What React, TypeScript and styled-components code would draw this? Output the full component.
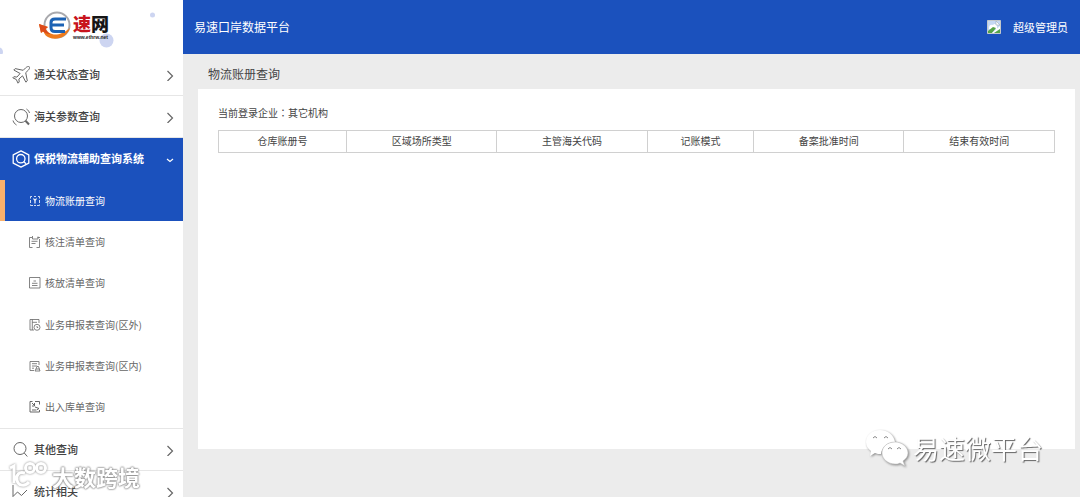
import React from 'react';
import styled, { createGlobalStyle, css } from 'styled-components';

const BLUE = '#1b51bd';

const GlobalStyle = createGlobalStyle`
  * { box-sizing: border-box; }
  body {
    margin: 0;
    background: #ececec;
    font-family: "Noto Sans CJK SC", "Liberation Sans", sans-serif;
    color: #444;
  }
`;

const Page = styled.div`
  display: flex;
  height: 100vh;
  overflow: hidden;
`;

const Sidebar = styled.aside`
  flex: 0 0 183px;
  background: #fff;
  overflow: hidden;
`;

const LogoBox = styled.div`
  position: relative;
  display: flex;
  height: 54px;
  padding: 10px 0 0 38px;
`;

const Bubbles = styled.svg`
  position: absolute;
  left: 0;
  top: 0;
`;

const LogoMark = styled.svg`
  position: relative;
  flex: none;
`;

const LogoWords = styled.div`
  position: relative;
  padding-top: 3px;
`;

const LogoName = styled.div`
  font-size: 18px;
  font-weight: 900;
  line-height: 21px;
  color: #151515;
`;

const LogoRed = styled.span`
  color: #c8141d;
`;

const LogoUrl = styled.div`
  font: bold 5px/6px "Liberation Sans", sans-serif;
  color: #222;
`;

const MenuButton = styled.button<{ $active?: boolean }>`
  display: flex;
  align-items: center;
  gap: 4px;
  width: 100%;
  height: 42px;
  padding: 0 8px 0 12px;
  border: 0;
  border-bottom: 1px solid #e6e6e6;
  background: #fff;
  color: #666;
  font: 500 11px/16px "Noto Sans CJK SC", sans-serif;
  text-align: left;
  ${p => p.$active && css`
    border-bottom-color: ${BLUE};
    background: ${BLUE};
    color: #fff;
    font-weight: 700;
  `}
`;

const MenuLabel = styled.span<{ $active?: boolean }>`
  flex: 1;
  padding-bottom: 2px;
  color: ${p => (p.$active ? '#fff' : '#444')};
  white-space: nowrap;
`;

const SubMenu = styled.nav`
  display: grid;
  grid-template-rows: repeat(6, 1fr);
  height: 249px;
  border-bottom: 1px solid #e6e6e6;
`;

const SubLink = styled.a<{ $active?: boolean }>`
  display: flex;
  align-items: center;
  gap: 4px;
  padding-left: 24px;
  border-left: 5px solid ${p => (p.$active ? '#f9b06c' : 'transparent')};
  background: ${p => (p.$active ? BLUE : '#fff')};
  color: ${p => (p.$active ? '#fff' : '#666')};
  font-size: 10px;
  line-height: 16px;
  text-decoration: none;
  white-space: nowrap;
`;

const Main = styled.div`
  display: flex;
  flex: 1;
  flex-direction: column;
  min-width: 0;
`;

const TopBar = styled.header`
  display: flex;
  flex: none;
  align-items: center;
  justify-content: space-between;
  height: 54px;
  padding: 0 12px 0 11px;
  background: ${BLUE};
  color: #fff;
`;

const SiteTitle = styled.span`
  font-size: 12px;
  line-height: 18px;
`;

const User = styled.div`
  display: flex;
  align-items: center;
  gap: 12px;
  font-size: 11px;
  line-height: 16px;
`;

const PageTitle = styled.h1`
  margin: 0;
  padding: 11px 0 6px 25px;
  font-size: 12px;
  font-weight: 400;
  line-height: 18px;
`;

const Panel = styled.section`
  flex: 1;
  margin: 0 5px 48px 15px;
  padding: 16px 20px;
  background: #fff;
`;

const Company = styled.p`
  margin: 0 0 9px;
  font-size: 10px;
  line-height: 16px;
`;

const Colon = styled.span`
  font-family: "Noto Sans CJK TC", sans-serif;
`;

const Table = styled.table`
  width: 100%;
  border-collapse: collapse;
  table-layout: fixed;
`;

const Th = styled.th<{ $width: number }>`
  width: ${p => p.$width}%;
  height: 22px;
  padding: 0 0 2px;
  border: 1px solid #d0d0d0;
  font-size: 10px;
  font-weight: 400;
  line-height: 16px;
`;

const Watermark = styled.div<{ $side: 'left' | 'right' }>`
  position: fixed;
  display: flex;
  align-items: center;
  color: #fff;
  white-space: nowrap;
  pointer-events: none;
  ${p => p.$side === 'left' ? css`
    left: 8px;
    bottom: 5px;
    gap: 4px;
    font-size: 22px;
    font-weight: 700;
    line-height: 32px;
    text-shadow: 0 0 2px #888, 0 0 2px #888, 0 0 2px #aaa;
  ` : css`
    right: 37px;
    bottom: 30px;
    gap: 4px;
    font-size: 26px;
    line-height: 38px;
    text-shadow: 1px 1px 1px #666;
  `}
`;

const WatermarkArt = styled.svg<{ $glow?: boolean }>`
  filter: ${p => (p.$glow ? 'drop-shadow(0 0 1px #888)' : 'drop-shadow(1px 1px 1px #888)')};
`;

const menuIcons: Record<string, React.ReactNode> = {
  plane: <path d="M17.3.8c-1-.7-2.500 0-3.600 1L11.200 4.300 3.200 2.600 1.800 4l6.300 3.500-3.200 3.600-3-.4L.8 11.800l3.500 1.700 1.700 3.700 1.200-1.200-.3-3 3.600-3.200 3.400 6.400 1.400-1.400-1.600-8.100 2.600-2.500c1-1.100 1.700-2.700 1-3.400z" />,
  scan: <><circle cx="9" cy="8" r="6.500" /><path d="M13.500 12.700l3.500 3.800" strokeWidth="2" /><path d="M1 12.500c.6 2 1.800 3.500 3.500 4.500M14.500 1c1.600 1 2.500 2.400 3 4" /></>,
  hex: <><path d="M9 .8l7.800 4v8.400L9 17.200l-7.800-4V4.800z" strokeWidth="1.300" /><circle cx="8.800" cy="8.700" r="4.200" strokeWidth="1.300" /><path d="M11.600 11.500l2.400 2.200" strokeWidth="1.300" /></>,
  search: <><circle cx="8" cy="7.500" r="6" /><path d="M12.300 12l3 3.500" /></>,
  chart: <path d="M1 2v14.500M1.500 13l4-4 4 3.500L15 7" />,
};

const subIcons: Record<string, React.ReactNode> = {
  ledger: <><path d="M3 1.500H1.500v2M1.500 5v3M1.500 9.500v1H4M9 1.500h1.500v2M10.500 5v3M10.500 9.500v1H8M5 1.500h2M5 10.500h2" /><path d="M4.500 3.500L6 5.500l1.500-2M6 5.500v3" strokeWidth="1.200" /></>,
  notes: <><path d="M3 1.500H.5v10h3M8.500 1.500H11M10.500 3v8.500H7.500" /><path d="M3.500 0v3H9V.5M2.500 5.300h6M2.500 7.500h4" /></>,
  release: <path d="M.5.500h10.500v10.500H.5zM3 8.500h5.500M3 6.300h5.500M4.500 4h2.500" />,
  outside: <><path d="M5 11H1V.5h9V4M3.300 3.300H8M3.300.500V11" /><circle cx="8" cy="8.300" r="3" /><path d="M8 7v1.500h1.200" /></>,
  inside: <path d="M5 10.500H1v-9h9V5M3 3.700h5M3 6h5M3 8.200h2M6 11l2-4.500h1.500L11 11zM7 9h3.500" />,
  stock: <path d="M3.500.500H1v10.500h9.500V9M6 .5h4.500v3M3 2l2.500 2.500M5.500 2v3H3M3 9h4M6 6l4 1.500L7.500 9" strokeWidth="1" />,
};

function MenuIcon({ name }: { name: string }) {
  return <svg width="18" height="18" viewBox="0 0 18 18" fill="none" stroke="currentColor" strokeLinejoin="round" aria-hidden="true">{menuIcons[name]}</svg>;
}

function SubIcon({ name }: { name: string }) {
  return <svg width="12" height="12" viewBox="0 0 12 12" fill="none" stroke="currentColor" strokeWidth="0.8" aria-hidden="true">{subIcons[name]}</svg>;
}

function Chevron({ open }: { open?: boolean }) {
  return (
    <svg width="10" height="12" viewBox="0 0 10 12" fill="none" stroke="currentColor" strokeWidth="1.2" aria-hidden="true">
      <path d={open ? 'M2 6l3 2.500L8 6' : 'M2.500 2l5 5-5 5'} />
    </svg>
  );
}

function MenuItem({ icon, label, active }: { icon: string; label: string; active?: boolean }) {
  return (
    <MenuButton type="button" $active={active} aria-expanded={!!active}>
      <MenuIcon name={icon} />
      <MenuLabel $active={active}>{label}</MenuLabel>
      <Chevron open={active} />
    </MenuButton>
  );
}

const subItems = [
  { icon: 'ledger', label: '物流账册查询' },
  { icon: 'notes', label: '核注清单查询' },
  { icon: 'release', label: '核放清单查询' },
  { icon: 'outside', label: '业务申报表查询(区外)' },
  { icon: 'inside', label: '业务申报表查询(区内)' },
  { icon: 'stock', label: '出入库单查询' },
];

const columns = [
  { label: '仓库账册号', width: 15.3 },
  { label: '区域场所类型', width: 18 },
  { label: '主管海关代码', width: 18 },
  { label: '记账模式', width: 12.7 },
  { label: '备案批准时间', width: 18 },
  { label: '结束有效时间', width: 18 },
];

function Logo() {
  return (
    <LogoBox>
      <Bubbles width="183" height="54" aria-hidden="true">
        <circle cx="152.500" cy="15" r="2.500" fill="#cdd5f1" />
        <circle cx="106.500" cy="40.500" r="7" fill="#cdd5f1" />
        <circle cx="-2" cy="52" r="5" fill="#cdd5f1" />
      </Bubbles>
      <LogoMark width="35" height="30" viewBox="0 0 35 30" aria-hidden="true">
        <circle cx="19" cy="15" r="12.500" fill="#fff" stroke="#a9a9ad" strokeWidth="2" />
        <path d="M1 14l9 3-2.500 2C11 25 20 28 32 18c-3 9-13 13-21 9.500-3-1.300-4.500-3-5.500-6L3 23z" fill="#ee7b1c" />
        <path d="M1 14l9 3-2.500 2c1 2 3 4 5 5-4 0-7-2-8-3L3 23z" fill="#dc4a1b" />
        <path d="M28 9H17q-4 0-4 3.500v5q0 4 4 4h10M13 15h13" fill="none" stroke="#1c62b4" strokeWidth="3" />
      </LogoMark>
      <LogoWords>
        <LogoName><LogoRed>速</LogoRed>网</LogoName>
        <LogoUrl>www.ethrw.net</LogoUrl>
      </LogoWords>
    </LogoBox>
  );
}

export default function App() {
  return (
    <>
      <GlobalStyle />
      <Page>
        <Sidebar>
          <Logo />
          <MenuItem icon="plane" label="通关状态查询" />
          <MenuItem icon="scan" label="海关参数查询" />
          <MenuItem icon="hex" label="保税物流辅助查询系统" active />
          <SubMenu>
            {subItems.map((item, i) => (
              <SubLink key={item.icon} href="#" $active={i === 0}>
                <SubIcon name={item.icon} />
                {item.label}
              </SubLink>
            ))}
          </SubMenu>
          <MenuItem icon="search" label="其他查询" />
          <MenuItem icon="chart" label="统计相关" />
        </Sidebar>
        <Main>
          <TopBar>
            <SiteTitle>易速口岸数据平台</SiteTitle>
            <User>
              <svg width="14" height="14" viewBox="0 0 14 14" aria-hidden="true">
                <path d="M.5.500h13v13H.5z" fill="#c5d8f4" stroke="#c3c8cb" />
                <path d="M2 8c0-3 2-4 4-3 1-2 4-1 4 1v3H2z" fill="#fff" />
                <path d="M1 13v-2l5-4 3 1-4 5z" fill="#56a348" />
                <path d="M13 6v3l-6 4H5z" fill="#fff" />
                <path d="M13 9v4H7z" fill="#56a348" />
                <path d="M9 1l4 4H9z" fill="#fff" stroke="#9badb9" strokeWidth="0.600" />
              </svg>
              超级管理员
            </User>
          </TopBar>
          <PageTitle>物流账册查询</PageTitle>
          <Panel>
            <Company>当前登录企业<Colon>：</Colon>其它机构</Company>
            <Table>
              <thead>
                <tr>{columns.map(c => <Th key={c.label} $width={c.width} scope="col">{c.label}</Th>)}</tr>
              </thead>
            </Table>
          </Panel>
        </Main>
      </Page>
      <Watermark $side="left">
        <WatermarkArt $glow width="40" height="30" viewBox="0 0 40 30" fill="none" stroke="#fff" strokeWidth="3" aria-hidden="true">
          <path d="M2 7l4-2v17M17 12c-6-2-9 2-8 7 1 6 8 7 12 2" />
          <circle cx="22" cy="7" r="4.500" />
          <circle cx="33" cy="7" r="4.500" />
        </WatermarkArt>
        大数跨境
      </Watermark>
      <Watermark $side="right">
        <WatermarkArt width="44" height="38" viewBox="0 0 44 38" fill="#fff" aria-hidden="true">
          <path d="M15 1C7 1 1 6 1 13c0 4 2 7 5 9l-1 5 5-3c2 1 4 1 6 1 1-7 6-12 14-12C29 6 23 1 15 1z" />
          <path d="M30 13c-8 0-13 5-13 11s6 11 13 11c2 0 3 0 5-1l5 3-2-5c3-2 5-5 5-8 0-6-6-11-13-11z" stroke="#bbb" strokeWidth="0.500" />
          <path d="M8 9q2-3 4 0M19 9q2-3 4 0M23 20q2-3 4 0M32 20q2-3 4 0" fill="none" stroke="#888" />
        </WatermarkArt>
        易速微平台
      </Watermark>
    </>
  );
}
